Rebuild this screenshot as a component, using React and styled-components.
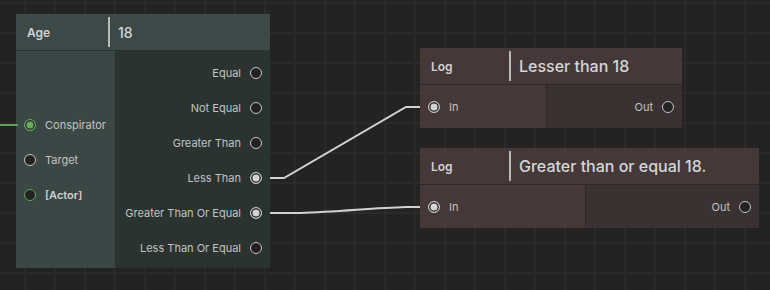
import React from 'react'
import styled, { createGlobalStyle } from 'styled-components'

const GlobalStyle = createGlobalStyle`
  html, body {
    margin: 0;
    padding: 0;
    background: #232323;
  }
  body {
    font-family: Inter, "Noto Sans", sans-serif;
    -webkit-font-smoothing: antialiased;
  }
`

const themes = {
  teal: { header: '#3c4947', left: '#3b4745', right: '#2b3331', line: '#263030' },
  brown: { header: '#443838', left: '#443838', right: '#3a3232', line: '#2e2828' },
}

function App() {
  return (
    <>
      <GlobalStyle />
      <Canvas>
        <Wires width="770" height="290">
          <path d="M0 125 H18" stroke="#5f9e5a" strokeWidth="2" fill="none" />
          <path d="M270 178 H284 L406 107 H420" stroke="#d2d2d2" strokeWidth="2" fill="none" />
          <path d="M270 213 H300 C340 212 370 208 406 207 H420" stroke="#d2d2d2" strokeWidth="2" fill="none" />
        </Wires>

        <Node $x={16} $y={14} $w={254} $theme="teal">
          <Header $theme="teal">
            <Title $w={94}>Age</Title>
            <Value $size={14}>18</Value>
          </Header>
          <Body $h={217}>
            <Inputs $w={99} $theme="teal">
              <Port label="Conspirator" state="green" />
              <Port label="Target" />
              <Port label="[Actor]" state="greenRing" bold />
            </Inputs>
            <Outputs $theme="teal" $top>
              <Port label="Equal" right />
              <Port label="Not Equal" right />
              <Port label="Greater Than" right />
              <Port label="Less Than" right state="filled" />
              <Port label="Greater Than Or Equal" right state="filled" />
              <Port label="Less Than Or Equal" right />
            </Outputs>
          </Body>
        </Node>

        <Node $x={420} $y={48} $w={262} $theme="brown">
          <Header $theme="brown">
            <Title $w={91}>Log</Title>
            <Value $size={16}>Lesser than 18</Value>
          </Header>
          <Body $h={43}>
            <Inputs $w={126} $theme="brown">
              <Port label="In" state="filled" />
            </Inputs>
            <Outputs $theme="brown">
              <Port label="Out" right />
            </Outputs>
          </Body>
        </Node>

        <Node $x={420} $y={148} $w={339} $theme="brown">
          <Header $theme="brown">
            <Title $w={91}>Log</Title>
            <Value $size={16}>Greater than or equal 18.</Value>
          </Header>
          <Body $h={43}>
            <Inputs $w={165} $theme="brown">
              <Port label="In" state="filled" />
            </Inputs>
            <Outputs $theme="brown">
              <Port label="Out" right />
            </Outputs>
          </Body>
        </Node>
      </Canvas>
    </>
  )
}

function Port({ label, right, state, bold }) {
  return (
    <PortRow $right={right}>
      {right && <PortLabel>{label}</PortLabel>}
      <Dot $state={state} />
      {!right && <PortLabel $bold={bold}>{label}</PortLabel>}
    </PortRow>
  )
}

export default App

const Canvas = styled.div`
  position: relative;
  width: 770px;
  height: 290px;
  overflow: hidden;
  background-color: #232323;
  background-image:
    linear-gradient(to right, #2a2a2a 2px, transparent 2px),
    linear-gradient(to bottom, #2a2a2a 2px, transparent 2px);
  background-size: 30px 30px;
  background-position: 24px 2px;
`

const Wires = styled.svg`
  position: absolute;
  left: 0;
  top: 0;
  z-index: 2;
  pointer-events: none;
`

const Node = styled.div`
  position: absolute;
  left: ${p => p.$x}px;
  top: ${p => p.$y}px;
  width: ${p => p.$w}px;
  display: flex;
  flex-direction: column;
  background: ${p => themes[p.$theme].line};
  z-index: 1;
`

const Header = styled.div`
  height: 36px;
  display: flex;
  align-items: center;
  background: ${p => themes[p.$theme].header};
  margin-bottom: 1px;
`

const Title = styled.div`
  width: ${p => p.$w}px;
  box-sizing: border-box;
  padding-left: 11px;
  height: 30px;
  display: flex;
  align-items: center;
  border-right: 2px solid #b9b9b9;
  color: #d2d2d2;
  font-size: 12px;
  font-weight: 600;
`

const Value = styled.div`
  padding-left: 8px;
  color: #d6d6d6;
  font-size: ${p => p.$size}px;
  font-weight: 500;
  white-space: nowrap;
`

const Body = styled.div`
  display: flex;
  height: ${p => p.$h}px;
`

const Inputs = styled.div`
  width: ${p => p.$w}px;
  display: flex;
  flex-direction: column;
  justify-content: center;
  background: ${p => themes[p.$theme].left};
  margin-right: 1px;
`

const Outputs = styled.div`
  flex: 1;
  display: flex;
  flex-direction: column;
  justify-content: ${p => (p.$top ? 'flex-start' : 'center')};
  padding-top: ${p => (p.$top ? '4px' : '0')};
  background: ${p => themes[p.$theme].right};
`

const PortRow = styled.div`
  height: 35px;
  display: flex;
  align-items: center;
  justify-content: ${p => (p.$right ? 'flex-end' : 'flex-start')};
  gap: 9px;
  padding: 0 8px;
`

const PortLabel = styled.span`
  color: ${p => (p.$bold ? '#cfcfcf' : '#c2c2c2')};
  font-size: 11px;
  font-weight: ${p => (p.$bold ? 600 : 400)};
  white-space: nowrap;
`

const dotBorder = {
  green: '#5fa35a',
  greenRing: '#5fa35a',
}

const dotFill = {
  green: '#66ad60',
  filled: '#d4d4d4',
}

const Dot = styled.span`
  flex: none;
  width: 12px;
  height: 12px;
  box-sizing: border-box;
  border-radius: 50%;
  border: 1.5px solid ${p => dotBorder[p.$state] || '#c6c6c6'};
  background: ${p => (dotFill[p.$state] ? dotFill[p.$state] : '#222222')};
  box-shadow: ${p => (dotFill[p.$state] ? 'inset 0 0 0 1.5px #2a2a2a' : 'none')};
`
